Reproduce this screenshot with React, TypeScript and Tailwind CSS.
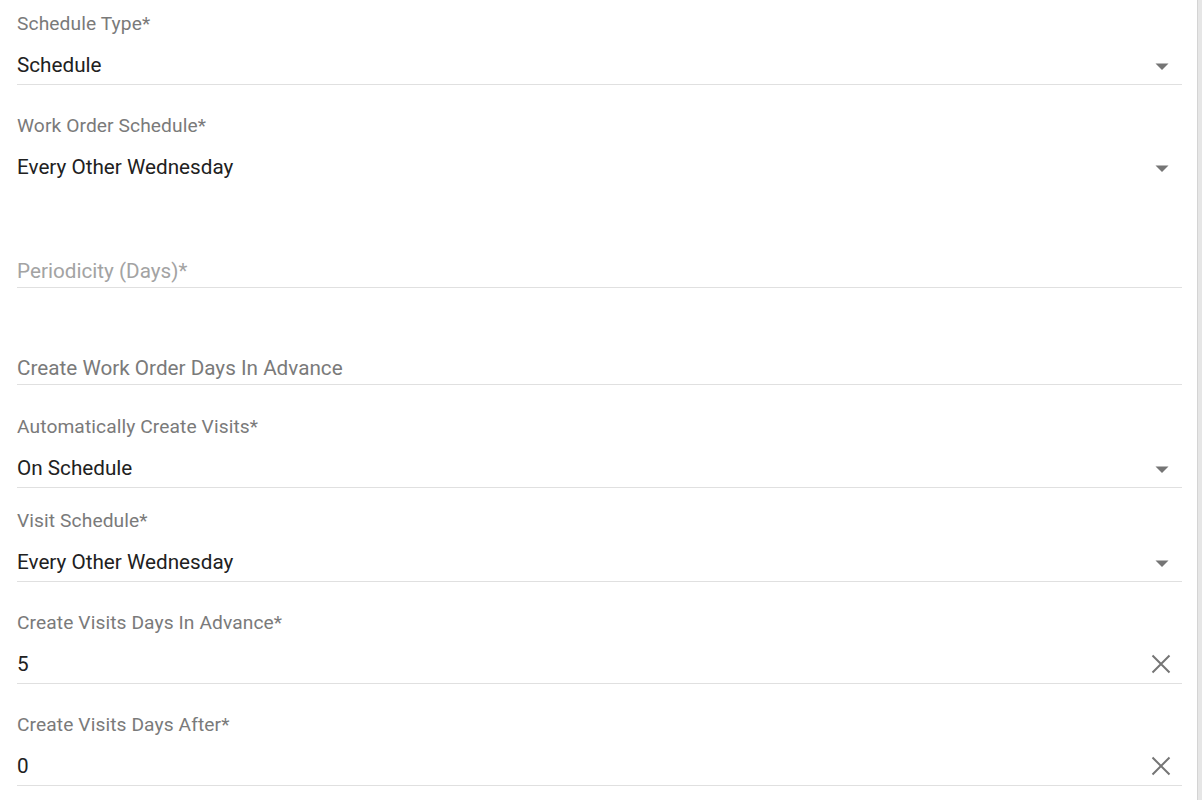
import React from "react";

type FieldProps = {
  label?: string;
  value?: string;
  placeholder?: string;
  muted?: boolean;
  icon?: "arrow" | "clear";
  line?: boolean;
  className: string;
};

const ArrowDrop = () => (
  <svg width="24" height="24" viewBox="0 0 24 24" className="text-[#757575]">
    <path d="M5.5 9.5l6.5 6.5 6.5-6.5z" fill="currentColor" />
  </svg>
);

const Clear = () => (
  <svg width="24" height="24" viewBox="0 0 24 24" className="text-[#757575]">
    <path d="M3.5 3.5l17 17M20.5 3.5l-17 17" stroke="currentColor" strokeWidth="2" fill="none" />
  </svg>
);

const Field = ({ label, value, placeholder, muted, icon, line = true, className }: FieldProps) => (
  <div className={`flex flex-col border-b ${line ? "border-[#e0e0e0]" : "border-transparent"} ${className}`}>
    <div className="h-5 pt-[2px] box-content text-[19.2px] leading-5 tracking-[0.1px] text-[#7a7a7a]">{label}</div>
    {value !== undefined ? (
      <div className="mt-[19px] h-6 pb-[7px] box-content flex items-center justify-between">
        <span className="text-[20.7px] leading-6 text-[#212121]">{value}</span>
        {icon === "arrow" && (
          <span className="mr-[8px] mt-[2px]">
            <ArrowDrop />
          </span>
        )}
        {icon === "clear" && (
          <span className="mr-[9px]">
            <Clear />
          </span>
        )}
      </div>
    ) : (
      <div className="mt-[20px] h-6 pb-[4px] box-content flex items-center">
        <span className={`text-[20.7px] leading-6 ${muted ? "text-[#a3a3a3]" : "text-[#7a7a7a]"}`}>{placeholder}</span>
      </div>
    )}
  </div>
);

const App = () => {
  return (
    <div className="flex min-h-[800px] w-full bg-white" style={{ fontFamily: "Roboto, 'Liberation Sans', sans-serif" }}>
      <div className="flex-1 pl-[17px] pr-[15px] pt-[12px]">
        <Field className="" label="Schedule Type*" value="Schedule" icon="arrow" />
        <Field className="mt-[29px]" label="Work Order Schedule*" value="Every Other Wednesday" icon="arrow" line={false} />
        <Field className="mt-[30px]" placeholder="Periodicity (Days)*" muted />
        <Field className="mt-[26px]" placeholder="Create Work Order Days In Advance" />
        <Field className="mt-[30px]" label="Automatically Create Visits*" value="On Schedule" icon="arrow" />
        <Field className="mt-[21px]" label="Visit Schedule*" value="Every Other Wednesday" icon="arrow" />
        <Field className="mt-[29px]" label="Create Visits Days In Advance*" value="5" icon="clear" />
        <Field className="mt-[29px]" label="Create Visits Days After*" value="0" icon="clear" />
      </div>
      <div className="w-[5px] shrink-0 border-l border-[#d4d4d4] bg-[#e6e6e6]" />
    </div>
  );
};

export default App;
